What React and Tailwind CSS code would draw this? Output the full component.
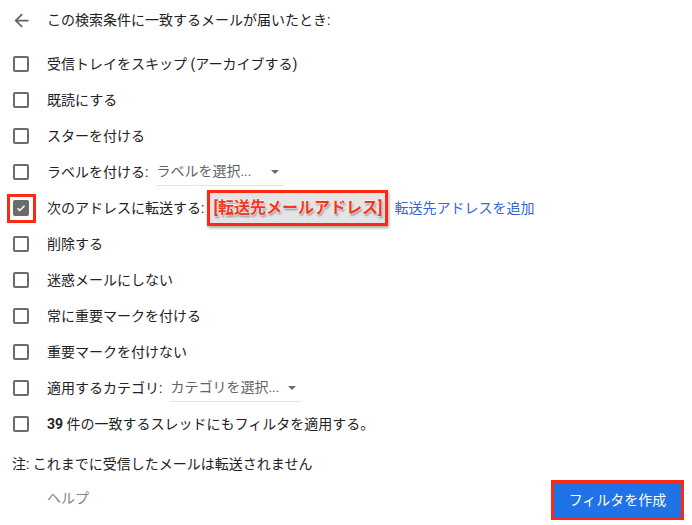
import { useState } from "react";

const font = { fontFamily: 'Roboto, "Noto Sans CJK JP", sans-serif' };

function Box({ checked, onClick }) {
  return (
    <button
      onClick={onClick}
      className={
        "ml-px flex h-4 w-4 shrink-0 items-center justify-center rounded-[2px] border-2 " +
        (checked ? "border-[#6b6b6b] bg-[#6b6b6b]" : "border-[#6b6b6b] bg-white")
      }
    >
      {checked && (
        <svg viewBox="0 0 24 24" className="h-[14px] w-[14px]" fill="none" stroke="#fff" strokeWidth="3">
          <path d="M5 12.5l4.5 4.5L19 7.5" />
        </svg>
      )}
    </button>
  );
}

function Dropdown({ text, width }) {
  return (
    <div className={"ml-2 flex h-7 items-center justify-between border-b border-[#e4e4e4] text-[#5f6368] " + width}>
      <span>{text}</span>
      <span className="mr-[5px] h-0 w-0 border-x-[4px] border-t-[4px] border-x-transparent border-t-[#6b6b6b]" />
    </div>
  );
}

export default function App() {
  const [checks, setChecks] = useState({ forward: true });
  const toggle = (k) => setChecks((c) => ({ ...c, [k]: !c[k] }));

  const rows = [
    { key: "skip", label: "受信トレイをスキップ (アーカイブする)" },
    { key: "read", label: "既読にする" },
    { key: "star", label: "スターを付ける" },
    { key: "label", label: "ラベルを付ける:", extra: <Dropdown text="ラベルを選択..." width="w-[128px]" /> },
    { key: "forward", label: "次のアドレスに転送する:", forward: true },
    { key: "delete", label: "削除する" },
    { key: "spam", label: "迷惑メールにしない" },
    { key: "important", label: "常に重要マークを付ける" },
    { key: "notimportant", label: "重要マークを付けない" },
    { key: "category", label: "適用するカテゴリ:", extra: <Dropdown text="カテゴリを選択..." width="w-[131px]" /> },
  ];

  return (
    <div className="h-[525px] w-[692px] overflow-hidden bg-white pl-3 pt-[2px] text-[14px] text-[#222]" style={font}>
      {/* ヘッダー */}
      <div className="flex h-9 items-center">
        <svg viewBox="0 0 24 24" className="-ml-px h-[21px] w-[21px]" fill="#5f6368">
          <path d="M20 11H7.83l5.59-5.59L12 4l-8 8 8 8 1.41-1.41L7.83 13H20v-2z" />
        </svg>
        <span className="ml-[15px]">この検索条件に一致するメールが届いたとき:</span>
      </div>

      <div className="mt-2">
        {rows.map((r) => (
          <div key={r.key} className="flex h-9 items-center">
            <div className="relative">
              <Box checked={!!checks[r.key]} onClick={() => toggle(r.key)} />
              {r.forward && (
                <div className="pointer-events-none absolute -left-[5px] -top-[6px] h-[29px] w-[29px] border-[3px] border-[#fa2a14]" />
              )}
            </div>
            <span className="ml-[18px]">{r.label}</span>
            {r.extra}
            {r.forward && (
              <>
                <div className="ml-[3px] flex h-[36px] w-[181px] items-center justify-center border-[3px] border-[#fa2a14] bg-[#e4e4e4] shadow-[1px_2px_3px_rgba(0,0,0,0.35)]">
                  <span className="text-[16px] font-bold text-[#f2361c] [text-shadow:0_0_2px_#fff,0_0_2px_#fff,1px_2px_2px_rgba(0,0,0,0.4)]">
                    [転送先メールアドレス]
                  </span>
                </div>
                <a href="#" className="ml-[6px] text-[#3367d6]">
                  転送先アドレスを追加
                </a>
              </>
            )}
          </div>
        ))}
        <div className="flex h-9 items-center">
          <Box checked={!!checks.apply} onClick={() => toggle("apply")} />
          <span className="ml-[18px]">
            <b>39</b> 件の一致するスレッドにもフィルタを適用する。
          </span>
        </div>
      </div>

      <div className="mt-1 flex h-9 items-center">注: これまでに受信したメールは転送されません</div>

      <div className="-mt-[2px] flex h-10 items-center justify-between pr-2">
        <span className="ml-[35px] -mt-1 text-[#80868b]">ヘルプ</span>
        <div className="border-[3px] border-[#fa2a14]">
          <button className="h-[34px] w-[127px] bg-[#1f73e6] text-white">フィルタを作成</button>
        </div>
      </div>
    </div>
  );
}
